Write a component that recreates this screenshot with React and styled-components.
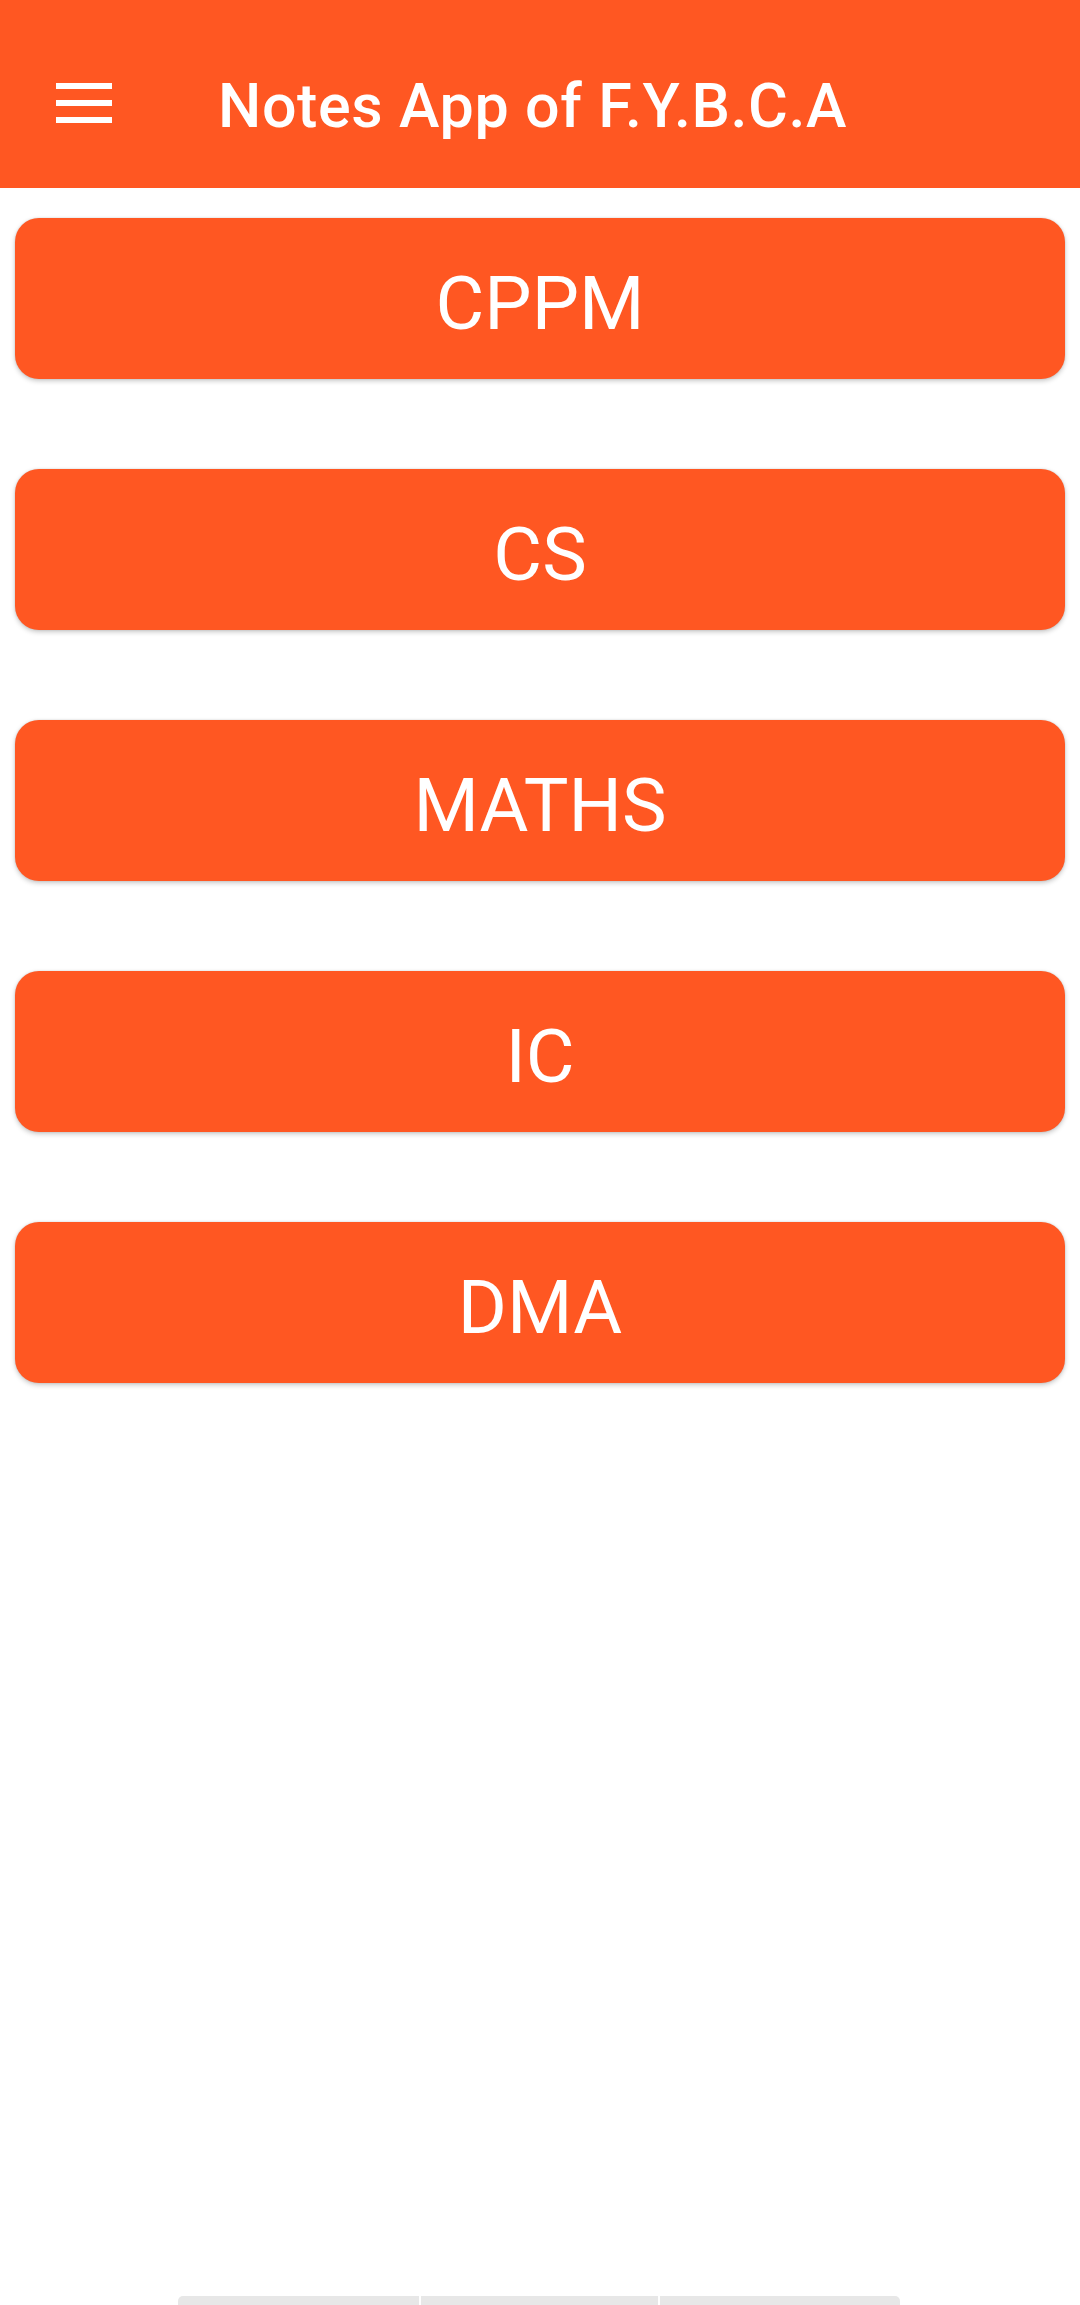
import React from "react";
import styled, { createGlobalStyle } from "styled-components";

const Global = createGlobalStyle`
  html, body { margin: 0; padding: 0; background: #ffffff; }
  body { font-family: Roboto, "Noto Sans", "Liberation Sans", sans-serif; }
  * { box-sizing: border-box; }
`;

const Screen = styled.div`
  width: 1080px;
  min-height: 2305px;
  display: flex;
  flex-direction: column;
  background: #ffffff;
`;

const Toolbar = styled.header`
  height: 188px;
  padding: 18px 0 0 56px;
  background: #ff5722;
  display: flex;
  align-items: center;
  gap: 106px;
`;

const MenuButton = styled.button`
  width: 56px;
  height: 40px;
  padding: 0;
  border: none;
  background: transparent;
  display: flex;
  flex-direction: column;
  justify-content: space-between;
  cursor: pointer;
`;

const MenuLine = styled.span`
  display: block;
  width: 56px;
  height: 6px;
  background: #ffffff;
`;

const Title = styled.h1`
  margin: 0;
  padding-top: 6px;
  color: #ffffff;
  font-family: Roboto, "Liberation Sans", sans-serif;
  font-weight: 500;
  font-size: 61px;
  letter-spacing: 0.6px;
  line-height: 1;
`;

const SubjectList = styled.main`
  display: flex;
  flex-direction: column;
  gap: 90px;
  padding: 30px 15px 0 15px;
`;

const SubjectButton = styled.button`
  height: 161px;
  width: 100%;
  border: none;
  border-radius: 24px;
  background: #ff5722;
  color: #ffffff;
  font-family: Roboto, "Liberation Sans", sans-serif;
  font-weight: 400;
  font-size: 75px;
  padding: 9px 0 0 0;
  box-shadow: 0 2px 5px rgba(0, 0, 0, 0.22), 0 0 2px rgba(0, 0, 0, 0.12);
  cursor: pointer;
`;

const GestureBar = styled.footer`
  margin-top: auto;
  display: flex;
  justify-content: center;
  gap: 2px;
  padding-left: 178px;
  padding-right: 180px;
`;

const GestureSegment = styled.span`
  flex: 0 0 ${(p) => p.$w}px;
  height: 9px;
  background: #e7e7e7;
  border-radius: ${(p) => p.$radius};
`;

const subjects = ["CPPM", "CS", "MATHS", "IC", "DMA"];

export default function App() {
  return (
    <>
      <Global />
      <Screen>
        <Toolbar>
          <MenuButton aria-label="menu">
            <MenuLine />
            <MenuLine />
            <MenuLine />
          </MenuButton>
          <Title>Notes App of F.Y.B.C.A</Title>
        </Toolbar>
        <SubjectList>
          {subjects.map((s) => (
            <SubjectButton key={s}>{s}</SubjectButton>
          ))}
        </SubjectList>
        <GestureBar>
          <GestureSegment $w={241} $radius="5px 0 0 0" />
          <GestureSegment $w={237} $radius="0" />
          <GestureSegment $w={240} $radius="0 5px 0 0" />
        </GestureBar>
      </Screen>
    </>
  );
}
